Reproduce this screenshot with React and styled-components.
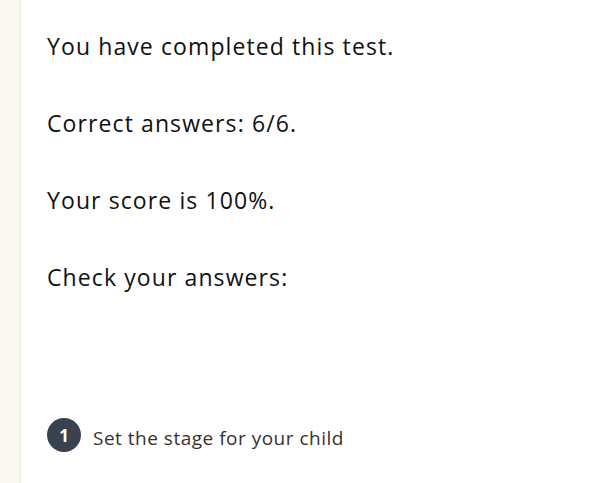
import React from 'react';
import styled, { createGlobalStyle } from 'styled-components';

const GlobalStyle = createGlobalStyle`
  html, body { margin: 0; padding: 0; background: #fff; }
  body { font-family: "Open Sans", "Lato", sans-serif; }
`;

const Page = styled.div`
  display: flex;
  min-height: 483px;
`;

const Rail = styled.div`
  width: 19px;
  flex: none;
  background: #f9f9f2;
  border-right: 2px solid #f0f0f0;
`;

const Main = styled.div`
  flex: 1;
  padding: 32px 0 0 26px;
`;

const Line = styled.p`
  margin: 0 0 48px;
  font-size: 23px;
  line-height: 29px;
  letter-spacing: 1.1px;
  color: #111;
`;

const Steps = styled.div`
  margin-top: 126px;
  display: flex;
  align-items: center;
  gap: 12px;
`;

const Badge = styled.span`
  flex: none;
  width: 34px;
  height: 34px;
  border-radius: 50%;
  background: #3a4250;
  color: #fff;
  font-weight: 700;
  font-size: 17px;
  display: flex;
  align-items: center;
  justify-content: center;
`;

const StepText = styled.span`
  font-size: 19px;
  letter-spacing: 0.5px;
  color: #3b2f2f;
  padding-top: 6px;
`;

export default function App() {
  const lines = [
    'You have completed this test.',
    'Correct answers: 6/6.',
    'Your score is 100%.',
    'Check your answers:',
  ];
  return (
    <Page>
      <GlobalStyle />
      <Rail />
      <Main>
        {lines.map((t) => (
          <Line key={t}>{t}</Line>
        ))}
        <Steps>
          <Badge>1</Badge>
          <StepText>Set the stage for your child</StepText>
        </Steps>
      </Main>
    </Page>
  );
}
